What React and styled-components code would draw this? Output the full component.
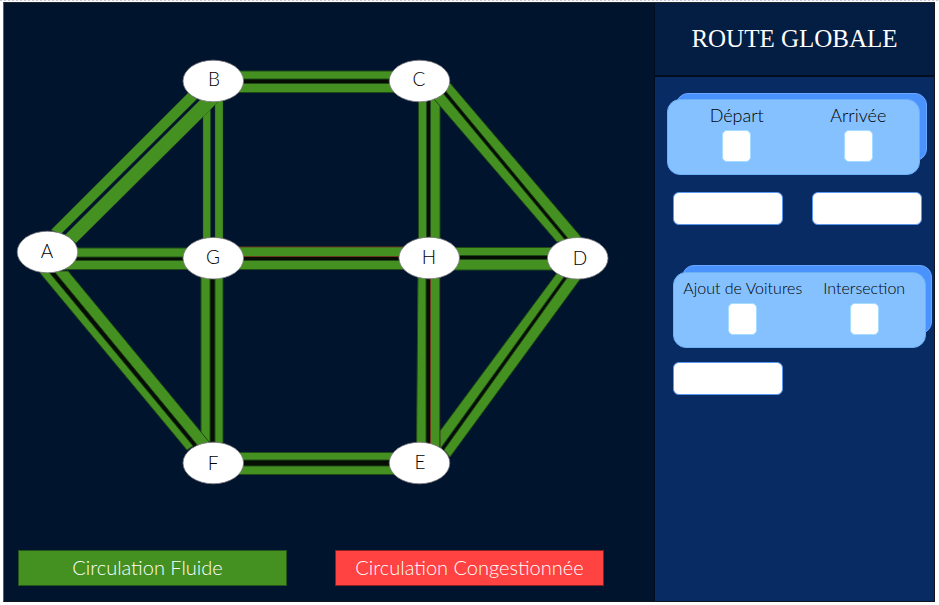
import React from "react";
import styled, { createGlobalStyle } from "styled-components";

const sans = `Lato, "Open Sans", sans-serif`;

const GlobalStyle = createGlobalStyle`
  *, *::before, *::after { box-sizing: border-box; }
  body { margin: 0; background: #fff; font-family: ${sans}; font-weight: 300; }
`;

const Page = styled.div`
  min-height: 100vh;
  display: flex;
  flex-direction: column;
  padding: 0 4px 3px 3px;
`;

const TopRule = styled.div`
  height: 2px;
  margin: 0 -4px 0 -3px;
  background: repeating-linear-gradient(90deg, #c3cad6 0 2px, #f4f5f8 2px 4px);
  border-bottom: 1px solid #fff;
`;

const Frame = styled.div`
  flex: 1;
  display: grid;
  grid-template-columns: minmax(0, 1fr) 279px;
  border: 1px solid #10151d;
  border-left-color: #5b6068;
  border-top-color: #22272f;
`;

const MapPanel = styled.main`
  display: flex;
  flex-direction: column;
  justify-content: space-between;
  background: #00142e;
  border-right: 1px solid #000c20;
`;

const Network = styled.svg`
  display: block;
  width: 100%;
`;

const NodeLabel = styled.text`
  font: 300 19px ${sans};
  text-anchor: middle;
  fill: #000;
`;

const Legend = styled.ul`
  display: grid;
  grid-template-columns: 1fr 1fr;
  gap: 48px;
  margin: 0;
  padding: 0 50px 15px 14px;
  list-style: none;
`;

const LegendItem = styled.li`
  height: 36px;
  display: flex;
  align-items: center;
  justify-content: center;
  background: ${(p) => p.$color};
  border: 1px solid ${(p) => p.$edge};
  padding-right: ${(p) => (p.$shift ? "10px" : "0")};
  padding-bottom: 2px;
  color: #fff;
  font-size: 20px;
  line-height: 24px;
  white-space: nowrap;
`;

const Sidebar = styled.aside`
  background: #082b63;
`;

const Header = styled.header`
  height: 74px;
  display: flex;
  align-items: center;
  justify-content: center;
  background: #041d42;
  border-bottom: 2px solid #010c1e;
`;

const Title = styled.h1`
  margin: 0;
  color: #fff;
  font: 400 25px "Liberation Serif", serif;
  white-space: nowrap;
`;

const Section = styled.section`
  padding: ${(p) => (p.$second ? "40px 2px 0 18px" : "16px 7px 0 12px")};
`;

const CardStack = styled.div`
  position: relative;
  padding: ${(p) => (p.$second ? "7px 6px 0 0" : "6px 7px 0 0")};

  &::before {
    content: "";
    position: absolute;
    inset: 0 0 14px 9px;
    border: 1px solid #6aa8ff;
    border-radius: 12px;
    background: #4a93ff;
  }
`;

const Card = styled.div`
  position: relative;
  height: 76px;
  display: grid;
  grid-template-columns: 1fr 1fr;
  padding: 4px 0 0 8px;
  border: 1px solid #6cb0f8;
  border-radius: 13px;
  background: #85c1ff;
`;

const Choice = styled.label`
  display: flex;
  flex-direction: column;
  align-items: center;
  gap: 4px;
  color: #000;
  font-size: ${(p) => (p.$small ? "16px" : "18px")};
  line-height: 22px;
  white-space: nowrap;
`;

const Check = styled.input`
  appearance: none;
  width: 29px;
  height: 32px;
  margin: 0;
  border: 1px solid #a5dcff;
  border-radius: 5px;
  background: #fff;

  &:checked { background: #082b63; box-shadow: inset 0 0 0 6px #fff; }
`;

const Fields = styled.div`
  display: flex;
  gap: 29px;
  padding: ${(p) => (p.$second ? "14px 0 0" : "17px 0 0 6px")};
`;

const Field = styled.input`
  width: 110px;
  height: 33px;
  padding: 0 8px;
  border: 1px solid #5a97ee;
  border-radius: 6px;
  background: #fff;
  font: 300 18px ${sans};
`;

const GREEN = "#449122";
const EDGE = "#1f4a18";
const RED_EDGE = "#6b3a1c";

/* Each road: a central reservation and the two lanes beside it. */
const roads = [
  { id: "BG", lanes: ["203,112 210.5,104 210.5,245 203,245", "215,98 223,98 223,245 215,245"] },
  { id: "AB", lanes: ["188,93 51,230 61,234 197,99", "201,99 65,235 76,243 213,107 222,98"] },
  { id: "BC", median: "230,78 400,78 400,84 230,84", lanes: ["230,71 400,71 400,79 230,79", "230,83.5 400,83.5 400,92.5 230,92.5"] },
  { id: "AG", median: "60,256 195,256 195,261 60,261", lanes: ["60,248 195,248 195,257 60,257", "60,260.5 195,260.5 195,269.5 60,269.5"] },
  { id: "GH", median: "230,256 410,256 410,261 230,261", lanes: ["230,247 410,247 410,256.5 230,256.5", "230,260.5 410,260.5 410,269.5 230,269.5"], congested: 0 },
  { id: "HD", median: "445,255 560,255 560,260 445,260", lanes: ["445,247.5 560,247.5 560,255.5 445,255.5", "445,259.5 560,259.5 560,270 445,270"] },
  { id: "GF", median: "209,270 216,270 216,450 209,450", lanes: ["201,270 210,270 210,450 201,450", "215,270 223,270 223,450 215,450"] },
  { id: "CH", median: "425,95 431,95 431,245 425,245", lanes: ["418.5,95 426.5,95 426.5,245 418.5,245", "430.5,95 440,95 440,245 430.5,245"] },
  { id: "AF", median: "48,273 56,273 198,446 191,447", lanes: ["40,273 48,271 193,446 187,450", "54,271 68,271 210,443 199,447"] },
  { id: "CD", median: "439,88 449,88 572,242 562,242", lanes: ["434,99 442,92 566,241 557,242", "450,83 444,89 568.5,239 582,238"] },
  { id: "DE", median: "563,278 569,276 446,451 440,451", lanes: ["557,273 564,277 440,449 440,431", "567,278 581,278 450,457 444,450"] },
  { id: "HE", median: "425,270 431,270 431,450 425,450", lanes: ["418,270 426,270 426,450 416.5,450", "430.5,270 439.7,270 439.7,450 430.5,450"], congested: 1 },
  { id: "FE", median: "230,459 400,459 400,467 230,467", lanes: ["230,452.5 400,452.5 400,460 230,460", "230,466 400,466 400,474.5 230,474.5"] },
];

const junctions = [
  ["A", 47.5, 252, 47, 258],
  ["B", 213.3, 81, 214, 86],
  ["C", 419.5, 81, 419, 86],
  ["D", 577.7, 258.3, 580, 265],
  ["E", 419.5, 463, 420, 469],
  ["F", 213.3, 463, 213, 470],
  ["G", 213.3, 258.2, 213, 264],
  ["H", 429.2, 258, 429, 264],
];

function RoadNetwork() {
  return (
    <Network viewBox="4 3 650 545" role="img" aria-label="Réseau routier">
      {roads.map((road) => (
        <g key={road.id}>
          {road.median && <polygon points={road.median} fill="#050d05" />}
          {road.lanes.map((points, i) => (
            <polygon
              key={points}
              points={points}
              fill={GREEN}
              stroke={road.congested === i ? RED_EDGE : EDGE}
              strokeWidth={road.median ? 1 : 0.4}
            />
          ))}
        </g>
      ))}
      {junctions.map(([name, cx, cy, x, y]) => (
        <g key={name}>
          <ellipse cx={cx} cy={cy} rx="30.3" ry="20.8" fill="#fff" stroke="#77747a" strokeWidth="0.8" />
          <NodeLabel x={x} y={y}>{name}</NodeLabel>
        </g>
      ))}
    </Network>
  );
}

function ChoiceCard({ labels, second }) {
  return (
    <CardStack $second={second}>
      <Card>
        {labels.map((label) => (
          <Choice key={label} $small={second}>
            {label}
            <Check type="checkbox" />
          </Choice>
        ))}
      </Card>
    </CardStack>
  );
}

export default function App() {
  return (
    <>
      <GlobalStyle />
      <Page>
        <TopRule />
        <Frame>
          <MapPanel>
            <RoadNetwork />
            <Legend>
              <LegendItem $color="#449122" $edge="#24551a" $shift>Circulation Fluide</LegendItem>
              <LegendItem $color="#ff4242" $edge="#8c2020">Circulation Congestionnée</LegendItem>
            </Legend>
          </MapPanel>
          <Sidebar>
            <Header>
              <Title>ROUTE GLOBALE</Title>
            </Header>
            <Section>
              <ChoiceCard labels={["Départ", "Arrivée"]} />
              <Fields>
                <Field type="text" aria-label="Départ" />
                <Field type="text" aria-label="Arrivée" />
              </Fields>
            </Section>
            <Section $second>
              <ChoiceCard labels={["Ajout de Voitures", "Intersection"]} second />
              <Fields $second>
                <Field type="text" aria-label="Nombre de voitures" />
              </Fields>
            </Section>
          </Sidebar>
        </Frame>
      </Page>
    </>
  );
}
